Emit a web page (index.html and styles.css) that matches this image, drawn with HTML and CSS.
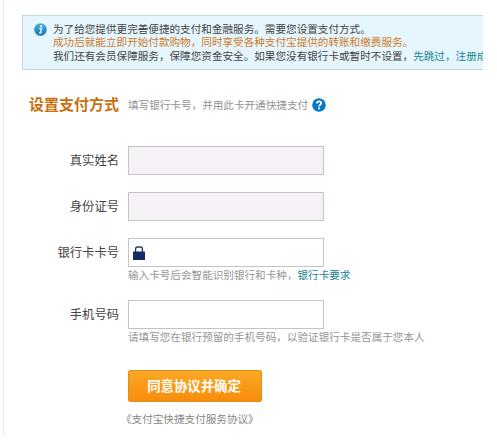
FILE: index.html
```
<!DOCTYPE html>
<html lang="zh-CN">
<head>
<meta charset="utf-8">
<title>设置支付方式</title>
<link rel="stylesheet" href="styles.css">
</head>
<body>
<main class="page">
  <section class="notice">
    <svg class="notice-icon" viewBox="0 0 13 13">
      <defs><linearGradient id="info" x1="0" y1="0" x2="0" y2="1"><stop offset="0" stop-color="#4bafe0"/><stop offset="1" stop-color="#1678b8"/></linearGradient></defs>
      <circle cx="6.5" cy="6.5" r="6.3" fill="url(#info)"/>
      <circle cx="7.3" cy="3.2" r="1.1" fill="#fff"/>
      <path d="M5.2 5.4h2.3L6.5 9.6h1.1M5.1 9.9h1.6" fill="none" stroke="#fff" stroke-width="1.3"/>
    </svg>
    <div class="notice-text">
      <p>为了给您提供更完善便捷的支付和金融服务。需要您设置支付方式。</p>
      <p class="highlight">成功后就能立即开始付款购物，同时享受各种支付宝提供的转账和缴费服务。</p>
      <p>我们还有会员保障服务，保障您资金安全。如果您没有银行卡或暂时不设置，<a class="link">先跳过，注册成功</a></p>
    </div>
  </section>
  <header class="heading">
    <h1>设置支付方式</h1>
    <span class="subtitle">填写银行卡号，并用此卡开通快捷支付</span>
    <svg class="help" viewBox="0 0 14 14">
      <circle cx="7" cy="7" r="6.8" fill="#0878c4"/>
      <path d="M4.9 5.5C4.9 2.6 9.3 2.7 9.2 5.2C9.2 6.7 7.1 6.6 7.1 8.6" fill="none" stroke="#fff" stroke-width="1.8"/>
      <path d="M6.2 9.6H8V11.3H6.2z" fill="#fff"/>
    </svg>
  </header>
  <form class="form">
    <div class="row"><label>真实姓名</label><div class="field disabled"></div></div>
    <div class="row"><label>身份证号</label><div class="field disabled"></div></div>
    <div class="row tall">
      <label>银行卡卡号</label>
      <div>
        <div class="field">
          <svg class="lock" viewBox="0 0 12 14">
            <path d="M2.6 6.5V3Q2.6 1 4.6 1H7.4Q9.4 1 9.4 3V6.5" fill="none" stroke="#25396a" stroke-width="1.4"/>
            <rect x="0" y="5.5" width="12" height="8.5" rx="0.6" fill="#142b65"/>
          </svg>
        </div>
        <p class="hint">输入卡号后会智能识别银行和卡种，<a class="link">银行卡要求</a></p>
      </div>
    </div>
    <div class="row last">
      <label>手机号码</label>
      <div>
        <div class="field"></div>
        <p class="hint">请填写您在银行预留的手机号码，以验证银行卡是否属于您本人</p>
      </div>
    </div>
    <button class="submit" type="button">同意协议并确定</button>
    <p class="agreement">《支付宝快捷支付服务协议》</p>
  </form>
</main>
</body>
</html>
```
FILE: styles.css
```
* { box-sizing: border-box; }
body {
  margin: 0;
  background: #fff;
  color: #444;
  font-family: "Noto Sans CJK SC", sans-serif;
  font-size: 10.6px;
}
p, h1 { margin: 0; }
.page {
  width: 480px;
  height: 436px;
  margin-left: 3px;
  padding: 15px 0 0 18px;
  border-left: 1px solid #f0e5ee;
  overflow: hidden;
}
.notice {
  display: flex;
  height: 55px;
  padding: 7px 0 0 11px;
  border: 1px solid #c3d9e2;
  border-right: 0;
  background: #e5f6fe;
  overflow: hidden;
}
.notice-icon {
  flex: none;
  width: 13px;
  height: 13px;
  margin-right: 6px;
}
.notice-text {
  flex: none;
  line-height: 13.3px;
  margin-top: -1px;
  white-space: nowrap;
}
.highlight { color: #d07a26; }
.link { color: #138491; }
.heading {
  display: flex;
  align-items: center;
  height: 22px;
  margin: 23px 0 0 7px;
}
h1 {
  width: 99px;
  color: #c96f0c;
  font-size: 15px;
  line-height: 22px;
  font-weight: 700;
  white-space: nowrap;
}
.subtitle {
  color: #929292;
  line-height: 16px;
  padding-top: 2px;
}
.help {
  width: 14px;
  height: 14px;
  margin: 2px 0 0 4px;
}
.form { padding-top: 31px; }
.row {
  display: flex;
  height: 46px;
}
.row.tall { height: 62px; }
.row.last { height: 70px; }
.row label {
  width: 97px;
  margin-right: 9px;
  font-size: 12.3px;
  line-height: 28px;
  text-align: right;
}
.field {
  display: flex;
  align-items: center;
  width: 196px;
  height: 29px;
  padding-left: 4px;
  border: 1px solid #c5c3c5;
  background: #fff;
}
.field.disabled { background: #f6f1f6; }
.lock {
  width: 12px;
  height: 14px;
}
.hint {
  color: #959595;
  line-height: 15px;
  white-space: nowrap;
}
.submit {
  display: block;
  width: 134px;
  height: 32px;
  margin-left: 106px;
  padding: 0 2px 2px 0;
  border: 1px solid #df8e20;
  border-radius: 2px;
  background: linear-gradient(#faa823, #f88d0c);
  color: #fff;
  font-family: inherit;
  font-size: 13.4px;
  font-weight: 700;
}
.agreement {
  margin: 9px 0 0 99px;
  color: #858585;
  line-height: 16px;
}
```
